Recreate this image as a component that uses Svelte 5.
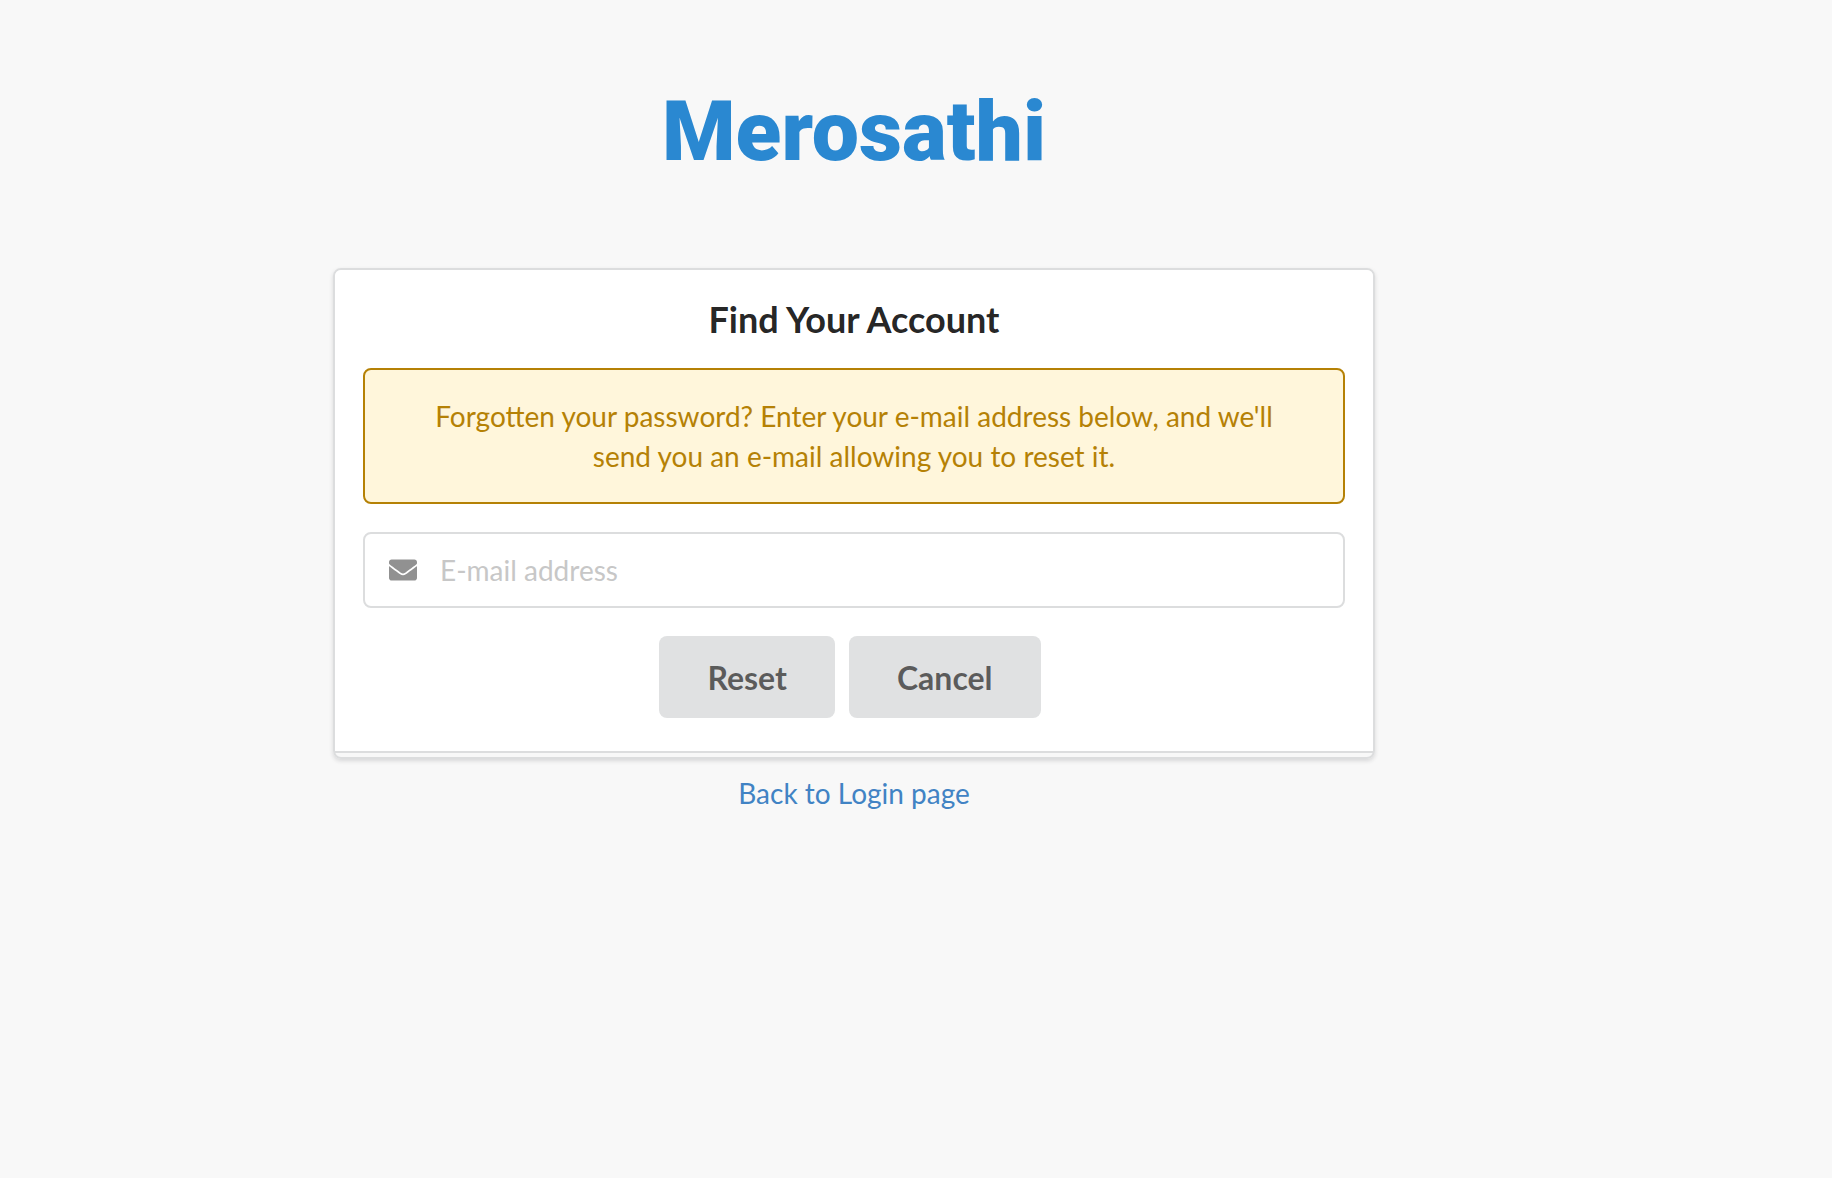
<script>
  let email = $state('');
</script>

<main>
  <h1>Merosathi</h1>
  <section class="card">
    <div class="segment">
      <h2>Find Your Account</h2>
      <div class="message">Forgotten your password? Enter your e-mail address below, and we'll send you an e-mail allowing you to reset it.</div>
      <label class="field">
        <svg viewBox="0 0 512 512" aria-hidden="true"><path d="M502.300 190.800c3.900-3.100 9.700-.2 9.700 4.700V400c0 26.500-21.500 48-48 48H48c-26.500 0-48-21.500-48-48V195.600c0-5 5.700-7.800 9.700-4.700 22.400 17.400 52.100 39.500 154.100 113.600 21.100 15.400 56.700 47.800 92.200 47.600 35.700.3 72-32.800 92.300-47.600 102-74.100 131.600-96.300 154-113.700zM256 320c23.200.4 56.600-29.200 73.400-41.400 132.700-96.300 142.800-104.700 173.400-128.700 5.800-4.500 9.200-11.500 9.200-18.900v-19c0-26.500-21.500-48-48-48H48c-26.500 0-48 21.500-48 48v19c0 7.400 3.400 14.300 9.200 18.900 30.600 23.900 40.700 32.400 173.400 128.700 16.800 12.200 50.200 41.800 73.400 41.400z"/></svg>
        <input type="email" placeholder="E-mail address" bind:value={email} />
      </label>
      <div class="buttons">
        <button>Reset</button>
        <button>Cancel</button>
      </div>
    </div>
  </section>
  <a href="#login">Back to Login page</a>
</main>

<style>
  :global(body) { background: #f8f8f8; }
  main { box-sizing: border-box; width: 1708px; min-height: 1178px; display: flex; flex-direction: column; align-items: center; font-family: Lato, sans-serif; font-size: 28px; line-height: 40px; }
  h1 { margin: 82px 0 0; height: 100px; line-height: 100px; font-family: Roboto, sans-serif; font-weight: 900; font-size: 84px; color: #2a88d1; }
  .card { box-sizing: border-box; width: 1042px; height: 491px; margin-top: 86px; border: 2px solid #dcddde; border-radius: 8px; box-shadow: 0 2px 4px rgba(34, 36, 38, .15); }
  .segment { box-sizing: border-box; height: 483px; padding: 26px 28px; background: #fff; border-bottom: 2px solid #dcddde; border-radius: 6px 6px 0 0; text-align: center; }
  h2 { margin: 0 0 26px; font-size: 36px; line-height: 46px; font-weight: 700; color: rgba(0, 0, 0, .87); }
  .message { box-sizing: border-box; height: 136px; padding: 26px 40px; border: 2px solid #b58105; border-radius: 8px; background: #fff6db; color: #b58105; }
  .field { box-sizing: border-box; display: flex; align-items: center; height: 76px; margin-top: 28px; padding: 0 24px; border: 2px solid #dcddde; border-radius: 8px; }
  svg { width: 28px; height: 28px; fill: #919191; }
  input { flex: 1; min-width: 0; margin: 0 0 0 23px; padding: 0; border: 0; outline: 0; background: transparent; font: inherit; }
  input::placeholder { color: #c7c7c7; opacity: 1; }
  .buttons { display: flex; justify-content: center; gap: 14px; margin-top: 28px; padding-right: 8px; }
  button { height: 82px; padding: 0 48px; border: 0; border-radius: 8px; background: #e0e1e2; color: rgba(0, 0, 0, .6); font: 700 32px Lato, sans-serif; }
  a { margin-top: 14px; color: #4183c4; text-decoration: none; }
</style>
